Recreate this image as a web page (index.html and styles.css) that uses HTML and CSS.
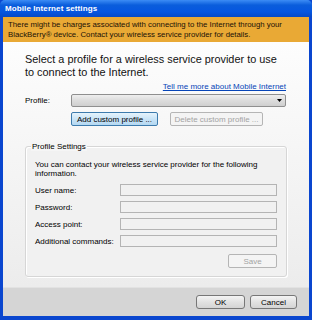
FILE: index.html
```html
<!DOCTYPE html>
<html>
<head>
  <title>Mobile Internet settings</title>
  <link rel="stylesheet" href="styles.css">
</head>
<body>

  <div class="window">

    <!-- Title bar -->
    <div class="titlebar">Mobile Internet settings</div>

    <!-- Warning banner -->
    <div class="banner">
      There might be charges associated with connecting to the Internet through your
      BlackBerry® device. Contact your wireless service provider for details.
    </div>

    <!-- Main content -->
    <div class="content">
      <div class="heading">Select a profile for a wireless service provider to use to connect to the Internet.</div>

      <div class="link-row"><a href="#">Tell me more about Mobile Internet</a></div>

      <div class="profile-row">
        <span class="label">Profile:</span>
        <div class="select">
          <svg width="5" height="3" viewBox="0 0 5 3"><path d="M0 0h5L2.5 3z" fill="#000"/></svg>
        </div>
      </div>

      <div class="button-row">
        <button class="btn btn-focus">Add custom profile ...</button>
        <button class="btn btn-disabled">Delete custom profile ...</button>
      </div>

      <!-- Profile settings group -->
      <div class="group">
        <span class="group-title">Profile Settings</span>
        <div class="group-text">You can contact your wireless service provider for the following information.</div>

        <div class="field"><span class="field-label">User name:</span><div class="input"></div></div>
        <div class="field"><span class="field-label">Password:</span><div class="input"></div></div>
        <div class="field"><span class="field-label">Access point:</span><div class="input"></div></div>
        <div class="field"><span class="field-label">Additional commands:</span><div class="input"></div></div>

        <div class="save-row"><button class="btn btn-disabled save">Save</button></div>
      </div>
    </div>

    <!-- Footer buttons -->
    <div class="footer">
      <button class="btn btn-dialog">OK</button>
      <button class="btn btn-dialog">Cancel</button>
    </div>

  </div>

</body>
</html>
```

FILE: styles.css
```css
/* Page reset */
body {
  margin: 0;
  font-family: "Liberation Sans", Arial, sans-serif;
  font-size: 8px;
  color: #000;
}

/* Dialog window frame */
.window {
  width: 312px;
  height: 320px;
  box-sizing: border-box;
  display: flex;
  flex-direction: column;
  background: #0b4fd6;
  border: 3px solid #0a46cf;
  border-top: none;
  border-bottom-width: 4px;
}

/* Title bar */
.titlebar {
  height: 17px;
  margin: 0 -3px;
  padding-left: 5px;
  display: flex;
  align-items: center;
  color: #fff;
  font-weight: bold;
  font-size: 8px;
  letter-spacing: 0.1px;
  border-radius: 5px 5px 0 0;
  background: linear-gradient(#3c8cf5, #0a5ddc 30%, #0656e0 70%, #0649c6);
}

/* Orange warning banner */
.banner {
  height: 25px;
  box-sizing: border-box;
  padding: 3px 5px 0;
  font-size: 7.8px;
  line-height: 10px;
  background: #e9a935;
  color: #1a1208;
}

/* Main content panel */
.content {
  flex: 1;
  padding: 11px 22px 0;
  background: linear-gradient(#fdfdfd, #f3f3f3 60%, #ececec);
}

.heading {
  font-size: 10.9px;
  line-height: 13px;
  color: #111;
}

.link-row {
  margin-top: 3px;
  text-align: right;
  padding-right: 1px;
}

.link-row a {
  color: #0645b8;
}

/* Profile select */
.profile-row {
  margin-top: 3px;
  display: flex;
  align-items: center;
}

.label {
  width: 46px;
}

.select {
  width: 215px;
  height: 13px;
  box-sizing: border-box;
  border: 1px solid #8f8f8f;
  border-radius: 2px;
  background: linear-gradient(#efefef, #dcdcdc 50%, #cfcfcf);
  display: flex;
  align-items: center;
  justify-content: flex-end;
  padding-right: 3px;
}

/* Buttons */
.button-row {
  margin-top: 5px;
  padding-left: 46px;
  display: flex;
  gap: 12px;
}

.btn {
  font-family: inherit;
  font-size: 8px;
  height: 14px;
  padding: 0;
  box-sizing: border-box;
  border: 1px solid #8a8a8a;
  border-radius: 2px;
  background: linear-gradient(#f4f4f4, #e2e2e2 50%, #d4d4d4);
  color: #000;
}

.btn-focus {
  width: 87px;
  border-color: #3d7bad;
  background: linear-gradient(#e6f3fc, #c9e4f7 50%, #b4d8f2);
}

.btn-disabled {
  width: 93px;
  border-color: #b5b5b5;
  background: #f4f4f4;
  color: #a3a3a3;
}

/* Profile settings group box */
.group {
  margin-top: 20px;
  padding: 0 9px 8px 9px;
  width: 262px;
  box-sizing: border-box;
  border: 1px solid #d6d6d6;
  border-radius: 3px;
  box-shadow: inset 1px 1px 0 #fff, 1px 1px 0 #fff;
  background: #f1f1f1;
}

/* Caption sitting on the top border */
.group-title {
  display: inline-block;
  margin: -5px 0 0 -4px;
  padding: 0 1px;
  line-height: 9px;
  vertical-align: top;
  background: #f5f5f5;
}

.group-text {
  margin-top: 4px;
  line-height: 9px;
  padding-right: 10px;
}

.field {
  display: flex;
  align-items: center;
  margin-top: 5px;
}

.group-text + .field {
  margin-top: 6px;
}

.field-label {
  width: 85px;
  flex-shrink: 0;
  white-space: nowrap;
}

.input {
  width: 157px;
  height: 12px;
  box-sizing: border-box;
  border: 1px solid #b4b4b4;
  background: #f1f1f1;
}

.save-row {
  margin-top: 7px;
  display: flex;
  justify-content: flex-end;
}

.btn.save {
  width: 49px;
}

/* Footer with dialog buttons */
.footer {
  height: 28px;
  display: flex;
  align-items: center;
  justify-content: flex-end;
  gap: 5px;
  padding-right: 12px;
  background: #d5d5d5;
  border-top: 1px solid #e2e2e2;
}

.btn-dialog {
  width: 49px;
  border-color: #777;
  border-radius: 3px;
}

.btn-dialog + .btn-dialog {
  width: 47px;
}
```
